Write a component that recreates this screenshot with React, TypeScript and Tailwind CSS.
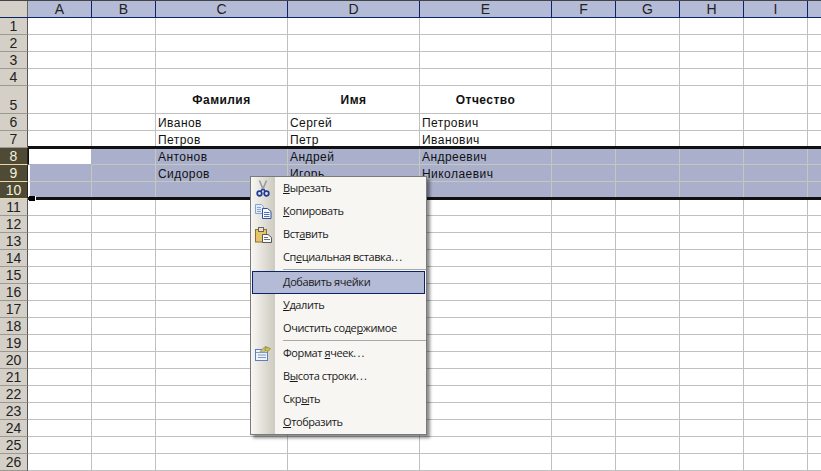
const colWidths = [64, 64, 132, 132, 132, 64, 64, 64, 64, 14];
const colNames = ['A', 'B', 'C', 'D', 'E', 'F', 'G', 'H', 'I', ''];

const rows: Record<number, string[]> = {
  6: ['', '', 'Иванов', 'Сергей', 'Петрович'],
  7: ['', '', 'Петров', 'Петр', 'Иванович'],
  8: ['', '', 'Антонов', 'Андрей', 'Андреевич'],
  9: ['', '', 'Сидоров', 'Игорь', 'Николаевич'],
};

function u(text: string, idx: number) {
  const dots = text.endsWith('...');
  const body = dots ? text.slice(0, -3) : text;
  return (
    <>
      {body.slice(0, idx)}
      <span className="underline">{body[idx]}</span>
      {body.slice(idx + 1)}
      {dots && <span className="tracking-[1.2px]">...</span>}
    </>
  );
}

function ScissorsIcon() {
  return (
    <svg width="16" height="17" viewBox="0 0 16 17">
      <path d="M4.5 0.5l3.5 8.5M11.5 0.5L8 9" stroke="#9a9ea6" strokeWidth="1.7" fill="none" />
      <path d="M7.5 9L5.5 12M8.5 9l2 3" stroke="#1f3a94" strokeWidth="1.6" fill="none" />
      <circle cx="4.5" cy="13.5" r="2.3" fill="#dfe4f2" stroke="#1f3a94" strokeWidth="1.7" />
      <circle cx="11.5" cy="13.5" r="2.3" fill="#dfe4f2" stroke="#1f3a94" strokeWidth="1.7" />
    </svg>
  );
}

function CopyIcon() {
  return (
    <svg width="17" height="15" viewBox="0 0 17 15">
      <path d="M0.5 0.5h6l2 2v7h-8z" fill="#e4ecfa" stroke="#86a3d6" />
      <path d="M2 3.5h4M2 5.5h4M2 7.5h4" stroke="#86a3d6" />
      <path d="M7.5 4.5h5l3.5 3v7h-8.5z" fill="#f7f9fe" stroke="#2d4f9e" />
      <path d="M9 8.5h5.5M9 10.5h5.5M9 12.5h5.5" stroke="#4d6fb4" />
    </svg>
  );
}

function PasteIcon() {
  return (
    <svg width="17" height="16" viewBox="0 0 17 16">
      <rect x="0.5" y="2.5" width="11" height="12.5" fill="#e6c468" stroke="#8f7230" />
      <rect x="3.5" y="0.5" width="5" height="4" fill="#e8e2c8" stroke="#6a6450" />
      <path d="M7.5 7.5h5.5l3.5 3v5h-9z" fill="#f8f8f4" stroke="#55585f" />
      <path d="M9 10.5h4M9 12.5h6" stroke="#6d7076" />
    </svg>
  );
}

function FormatIcon() {
  return (
    <svg width="17" height="15" viewBox="0 0 17 15">
      <rect x="0.5" y="3.5" width="12" height="11" fill="#eef3fb" stroke="#5b7fb8" />
      <path d="M1 6.5h11M3 9h8M3 11.5h8" stroke="#7d9bcb" />
      <path d="M5 5.5l5-5 3 1-4 5z" fill="#c9bd8a" stroke="#9a8d5c" strokeWidth="0.7" />
      <path d="M10.5 1l5 1.5-2.5 3-3-1z" fill="#d6bf3e" stroke="#7f8a35" strokeWidth="0.7" />
    </svg>
  );
}

type Item = { label: React.ReactNode; icon?: React.ReactNode; active?: boolean; sep?: boolean };

const menu: Item[] = [
  { label: u('Вырезать', 0), icon: <ScissorsIcon /> },
  { label: u('Копировать', 0), icon: <CopyIcon /> },
  { label: u('Вставить', 3), icon: <PasteIcon /> },
  { label: u('Специальная вставка...', 2), sep: true },
  { label: u('Добавить ячейки', 0), active: true },
  { label: u('Удалить', 0) },
  { label: u('Очистить содержимое', 13), sep: true },
  { label: u('Формат ячеек...', 7), icon: <FormatIcon /> },
  { label: u('Высота строки...', 1) },
  { label: u('Скрыть', 3) },
  { label: u('Отобразить', 0) },
];

function Row({ n, h, selected, bold }: { n: number; h: string; selected?: boolean; bold?: boolean }) {
  const values = rows[n] ?? [];
  return (
    <div className={`flex shrink-0 ${h}`}>
      <div
        className={`w-[28px] shrink-0 flex items-end justify-center border-r text-[14px] leading-[16px] ${
          selected
            ? 'bg-[#4f4a35] text-[#f4efdc] border-r-[#222] border-b border-b-[#ecd9a0]'
            : 'bg-[#d4d0c8] text-[#222] border-r-[#555] border-b border-b-[#9c9a90]'
        }`}
      >
        {n}
      </div>
      {colWidths.map((w, i) => {
        const activeCell = n === 8 && i === 0;
        return (
          <div
            key={i}
            style={{ width: w }}
            className={`shrink-0 border-b border-r px-[2px] pt-px flex items-center overflow-hidden whitespace-nowrap text-[12px] tracking-[0.45px] text-[#111] ${
              activeCell
                ? 'bg-white border-[#aab0cc] border-l border-l-[#111]'
                : selected
                  ? 'bg-[#aab0cc] border-[#c5c9bd]'
                  : 'bg-white border-[#c0c0c0]'
            } ${selected && !activeCell && i === 0 ? 'border-l-2 border-l-white' : ''} ${
              bold && i < 5 ? 'justify-center font-bold tracking-[0.6px] pt-0' : ''
            }`}
          >
            {bold ? { 2: 'Фамилия', 3: 'Имя', 4: 'Отчество' }[i] : values[i]}
          </div>
        );
      })}
    </div>
  );
}

export default function App() {
  return (
    <div className="relative w-[821px] h-[471px] overflow-hidden bg-white font-['Liberation_Sans',Arial,sans-serif]">
      <div className="h-px bg-[#444]" />
      <div className="flex h-[17px] border-b border-[#0a246a]">
        <div className="w-[28px] shrink-0 bg-[#d4d0c8] border-r border-[#666]" />
        {colWidths.map((w, i) => (
          <div
            key={i}
            style={{ width: w }}
            className="shrink-0 bg-[#b4bbd6] border-r border-[#0a246a] flex items-center justify-center text-[14px] leading-none text-[#222]"
          >
            {colNames[i]}
          </div>
        ))}
      </div>
      {[1, 2, 3, 4].map((n) => (
        <Row key={n} n={n} h="h-[17px]" />
      ))}
      <Row n={5} h="h-[28px]" bold />
      <Row n={6} h="h-[17px]" />
      <Row n={7} h="h-[17px]" />
      <Row n={8} h="h-[17px]" selected />
      <Row n={9} h="h-[17px]" selected />
      <Row n={10} h="h-[17px]" selected />
      {Array.from({ length: 16 }, (_, i) => i + 11).map((n) => (
        <Row key={n} n={n} h="h-[17px]" />
      ))}

      {/* selection border */}
      <div className="absolute left-[28px] right-0 top-[146px] h-[54px] border-y-[3px] border-[#111] pointer-events-none" />
      <div className="absolute left-[29px] top-[196px] w-[7px] h-[5px] bg-black border-r border-white" />

      {/* context menu */}
      <div className="absolute left-[250px] top-[176px] w-[177px] bg-[#f7f6f3] border border-[#7a7a7a] shadow-[3px_3px_3px_rgba(0,0,0,0.45)] font-['Open_Sans',sans-serif] text-[11px] tracking-[-0.4px] text-[#1a1a1a]">
        <div className="absolute left-0 top-0 bottom-0 w-[24px] bg-gradient-to-r from-[#f8f7f3] to-[#cdcabf]" />
        {menu.map((item, i) => (
          <div key={i} className="relative">
            <div
              className={`h-[23px] flex items-center ${item.active ? 'mx-px bg-[#b4bbd6] border border-[#0a246a]' : ''}`}
            >
              <div className={`w-[24px] shrink-0 flex justify-center ${item.active ? '-ml-[2px]' : ''}`}>{item.icon}</div>
              <div className="pl-[8px] whitespace-nowrap">{item.label}</div>
            </div>
            {item.sep && <div className="h-px ml-[32px] mb-px bg-[#a8a8a8]" />}
          </div>
        ))}
      </div>
    </div>
  );
}
